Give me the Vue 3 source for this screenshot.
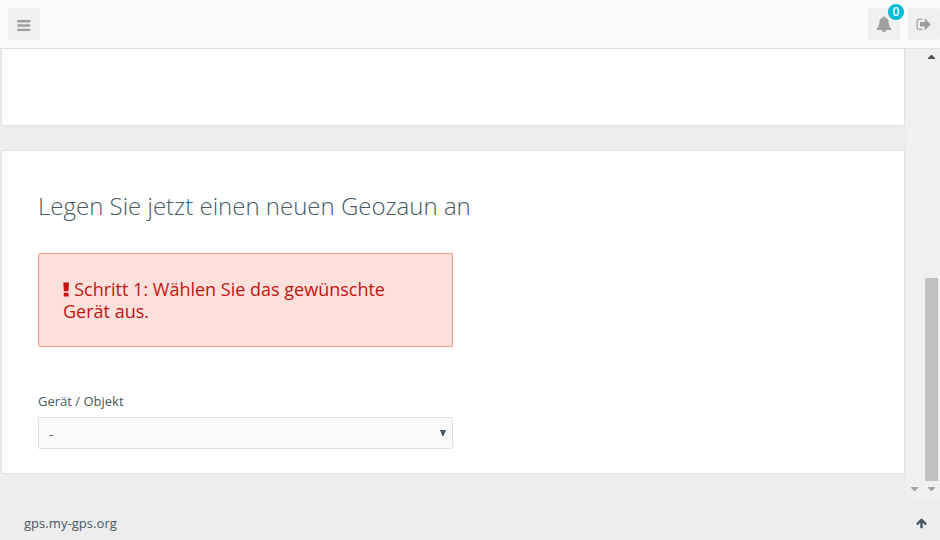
<script setup>
import { ref } from 'vue'

const notifications = ref(0)
const device = ref('-')
</script>

<template>
  <div class="page">
    <header class="header">
      <button class="header_btn" aria-label="Menu">
        <svg class="icon-bars" width="14" height="12" viewBox="0 0 14 12">
          <rect x="0.3" y="0" width="13" height="2.6" rx="0.5" />
          <rect x="0.3" y="4.3" width="13" height="2.5" rx="0.5" />
          <rect x="0.3" y="8.7" width="13" height="2.3" rx="0.5" />
        </svg>
      </button>
      <div class="header_right">
        <button class="header_btn" aria-label="Alarm">
          <svg width="16" height="16" viewBox="0 -32 1792 1792">
            <path
              d="M912 1696q0-16-16-16-59 0-101.5-42.5t-42.5-101.5q0-16-16-16t-16 16q0 73 51.5 124.5t124.5 51.5q16 0 16-16zm816-288q0 52-38 90t-90 38h-448q0 106-75 181t-181 75-181-75-75-181h-448q-52 0-90-38t-38-90q50-42 91-88t85-119.5 74.5-158.5 50-206 19.5-260q0-152 117-282.5t307-158.5q-8-19-8-39 0-40 28-68t68-28 68 28 28 68q0 20-8 39 190 28 307 158.5t117 282.5q0 139 19.5 260t50 206 74.5 158.5 85 119.5 91 88z"
            />
          </svg>
          <span class="badge">{{ notifications }}</span>
        </button>
        <button class="header_btn" aria-label="Logout">
          <svg width="16" height="16" viewBox="0 -32 1792 1792">
            <path
              d="M704 1440q0 4 1 20t.5 26.5-3 23.5-10 19.5-20.5 6.5h-320q-119 0-203.5-84.5t-84.5-203.5v-704q0-119 84.5-203.5t203.5-84.5h320q13 0 22.5 9.5t9.5 22.5q0 4 1 20t.5 26.5-3 23.5-10 19.5-20.5 6.5h-320q-66 0-113 47t-47 113v704q0 66 47 113t113 47h312l11.5 1 11.5 3 8 5.5 7 9 2 13.5zm928-544q0 26-19 45l-544 544q-19 19-45 19t-45-19-19-45v-288h-448q-26 0-45-19t-19-45v-384q0-26 19-45t45-19h448v-288q0-26 19-45t45-19 45 19l544 544q19 19 19 45z"
            />
          </svg>
        </button>
      </div>
    </header>

    <div class="body">
      <main class="content">
        <section class="card card-top"></section>
        <section class="card card-form">
          <h1 class="title">Legen Sie jetzt einen neuen Geozaun an</h1>
          <div class="alert">
            <svg class="alert_icon" width="6.5" height="15" viewBox="0 0 6.5 15">
              <path d="M0.3 0.6h5.7l-0.6 8.6h-4.5zM0.7 10.8h4.9v3.6h-4.9z" />
            </svg>
            Schritt 1: Wählen Sie das gewünschte Gerät aus.
          </div>
          <div class="label">Gerät / Objekt</div>
          <div class="select">
            <span>{{ device }}</span>
            <svg width="6" height="6" viewBox="0 0 6 6"><path d="M0 0h6l-2.4 6h-1.2z" /></svg>
          </div>
        </section>
      </main>
      <div class="scroll scroll-inner">
        <svg width="7" height="4" viewBox="0 0 7 4"><path d="M0 0h7v1l-3 3h-1l-3-3z" /></svg>
      </div>
      <div class="scroll scroll-outer">
        <svg class="scroll_up" width="7" height="4" viewBox="0 0 7 4">
          <path d="M0 4h7v-1l-3-3h-1l-3 3z" />
        </svg>
        <div class="scroll_thumb"></div>
        <svg width="7" height="4" viewBox="0 0 7 4"><path d="M0 0h7v1l-3 3h-1l-3-3z" /></svg>
      </div>
    </div>

    <footer class="footer">
      <span class="footer_text">gps.my-gps.org</span>
      <svg width="11" height="11" viewBox="64 128 1664 1664">
        <path
          d="M1675 971q0 51-37 90l-75 75q-38 38-91 38-54 0-90-38l-294-293v704q0 52-37.5 84.5t-90.5 32.5h-128q-53 0-90.5-32.5t-37.5-84.5v-704l-294 293q-36 38-90 38t-90-38l-75-75q-38-38-38-90 0-53 38-91l651-651q35-37 90-37 54 0 91 37l651 651q37 39 37 91z"
        />
      </svg>
    </footer>
  </div>
</template>

<style>
body {
  background: #ededed;
}
</style>

<style scoped>
.page {
  display: flex;
  flex-direction: column;
  width: 940px;
  height: 540px;
  overflow: hidden;
  box-sizing: border-box;
  background: #ededed;
  color: #455a64;
  font-family: 'Open Sans', 'Liberation Sans', sans-serif;
  font-size: 13px;
}

.page * {
  box-sizing: border-box;
}

svg {
  display: block;
  fill: currentColor;
}

.header {
  display: flex;
  justify-content: space-between;
  height: 49px;
  flex: none;
  padding: 8px 0 0 8px;
  background: #fafafa;
  border-bottom: 1px solid #e0e0e0;
}

.header_right {
  display: flex;
  gap: 8px;
}

.header_btn {
  position: relative;
  display: flex;
  align-items: center;
  justify-content: center;
  width: 32px;
  height: 32px;
  padding: 0;
  border: none;
  border-radius: 2px;
  background: #f0f0f0;
  color: #9e9e9e;
}

.icon-bars {
  margin-top: 4px;
}

.badge {
  position: absolute;
  top: -4px;
  right: -4px;
  width: 16px;
  height: 16px;
  border-radius: 50%;
  background: #00bcd4;
  color: #fff;
  font-family: 'Open Sans', sans-serif;
  font-size: 12px;
  font-weight: 600;
  line-height: 16px;
  text-align: center;
}

.body {
  display: flex;
  height: 449px;
  flex: none;
}

.content {
  width: 906px;
  padding: 0 1px;
}

.card {
  background: #fff;
  border: 1px solid #e0e0e0;
  border-radius: 2px;
}

.card-top {
  height: 77px;
  border-top: none;
  border-radius: 0 0 2px 2px;
}

.card-form {
  height: 324px;
  margin-top: 24px;
  padding: 38px 36px 0;
}

.title {
  margin: 0;
  font-size: 24px;
  font-weight: 300;
  line-height: 34px;
}

.alert {
  width: 415px;
  height: 94px;
  margin-top: 30px;
  padding: 24px 24px 0;
  border: 1px solid #f99488;
  border-radius: 2px;
  background: #fde0dc;
  color: #c41411;
  font-size: 18px;
  line-height: 22px;
}

.alert_icon {
  display: inline-block;
  vertical-align: -1px;
}

.label {
  margin-top: 45px;
  line-height: 19px;
}

.select {
  display: flex;
  align-items: center;
  justify-content: space-between;
  width: 415px;
  height: 32px;
  margin-top: 6px;
  padding: 1px 6px 0 10px;
  border: 1px solid #e0e0e0;
  border-radius: 2px;
  background: #fafafa;
}

.select svg {
  margin-bottom: 2px;
}

.scroll {
  display: flex;
  flex-direction: column;
  align-items: center;
  justify-content: flex-end;
  width: 17px;
  padding-bottom: 7px;
  background: #f0f0f0;
  color: #a3a3a3;
}

.scroll-outer {
  justify-content: flex-start;
  padding: 6px 0 0;
}

.scroll_up {
  color: #505050;
}

.scroll_thumb {
  width: 13px;
  height: 203px;
  margin: 219px 0 6px;
  background: #c1c1c1;
}

.footer {
  display: flex;
  align-items: center;
  justify-content: space-between;
  height: 42px;
  padding: 8px 13px 0 24px;
}

.footer_text {
  letter-spacing: 0.05px;
}
</style>
